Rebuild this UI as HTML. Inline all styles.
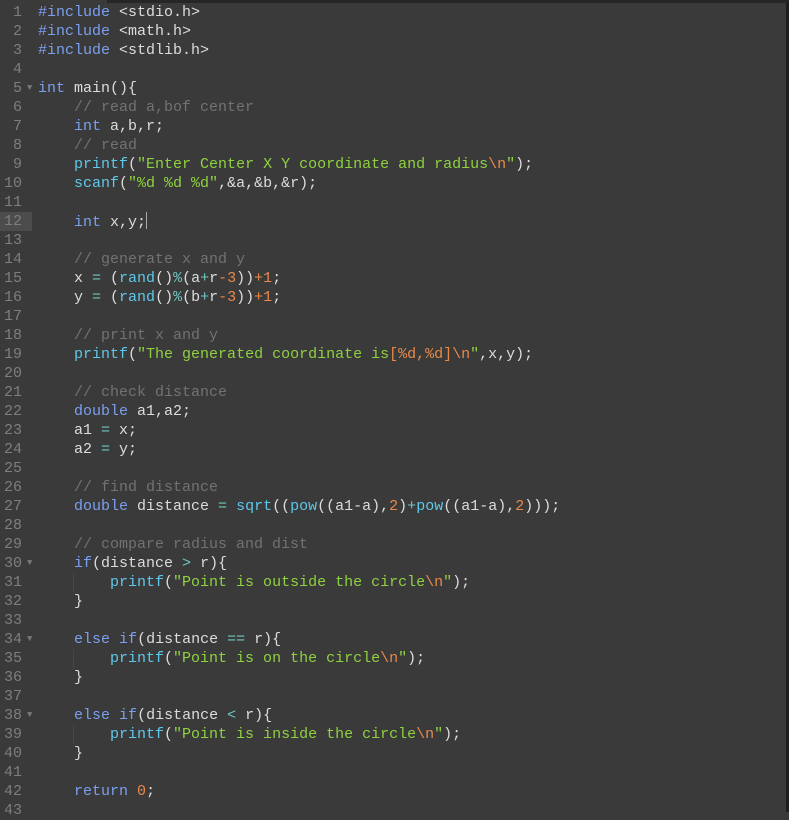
<!DOCTYPE html>
<html><head><meta charset="utf-8"><style>
html,body{margin:0;padding:0;width:789px;height:812px;overflow:hidden;background:#3a3a3a;}
#top{position:absolute;left:107px;top:0;width:682px;height:3px;background:#262626;}
#right{position:absolute;right:0;top:3px;width:3px;height:809px;background:#1e1e1e;}
.l{position:absolute;left:0;height:19px;width:789px;font-family:"Liberation Mono",monospace;font-size:15px;line-height:19px;white-space:pre;color:#dcdcdc;}
.n{position:absolute;left:0;width:22px;text-align:right;color:#7e7e7e;}
.f{position:absolute;left:27px;color:#777;font-size:9px;}
.c{position:absolute;left:38px;}
.k{color:#7b9ff0}.fn{color:#5ec8ea}.s{color:#8fd23f}.nm{color:#e8894a}.cm{color:#727272}.o{color:#6fc7c0}.e{color:#e8894a}
.hl{background:#4c4c4c;}
.g{position:absolute;width:1px;background:#474747;}
.cur{display:inline-block;width:1px;height:17px;background:#aaa;vertical-align:-3px;}
</style></head><body>
<div id="top"></div><div id="right"></div>
<div class="g" style="left:73px;top:573px;height:19px"></div>
<div class="g" style="left:73px;top:649px;height:19px"></div>
<div class="g" style="left:73px;top:725px;height:19px"></div>
<div class="l" style="top:3px"><span class="n">1</span><span class="c"><span class="k">#include</span> &lt;stdio.h&gt;</span></div>
<div class="l" style="top:22px"><span class="n">2</span><span class="c"><span class="k">#include</span> &lt;math.h&gt;</span></div>
<div class="l" style="top:41px"><span class="n">3</span><span class="c"><span class="k">#include</span> &lt;stdlib.h&gt;</span></div>
<div class="l" style="top:60px"><span class="n">4</span></div>
<div class="l" style="top:79px"><span class="n">5</span><span class="f">▼</span><span class="c"><span class="k">int</span> main(){</span></div>
<div class="l" style="top:98px"><span class="n">6</span><span class="c">    <span class="cm">// read a,bof center</span></span></div>
<div class="l" style="top:117px"><span class="n">7</span><span class="c">    <span class="k">int</span> a,b,r;</span></div>
<div class="l" style="top:136px"><span class="n">8</span><span class="c">    <span class="cm">// read</span></span></div>
<div class="l" style="top:155px"><span class="n">9</span><span class="c">    <span class="fn">printf</span>(<span class="s">"Enter Center X Y coordinate and radius</span><span class="e">\n</span><span class="s">"</span>);</span></div>
<div class="l" style="top:174px"><span class="n">10</span><span class="c">    <span class="fn">scanf</span>(<span class="s">"%d %d %d"</span>,&amp;a,&amp;b,&amp;r);</span></div>
<div class="l" style="top:193px"><span class="n">11</span></div>
<div class="l" style="top:212px"><span class="n hl" style="width:32px;padding-right:0;text-align:right"><span style="padding-right:10px">12</span></span><span class="c">    <span class="k">int</span> x,y;<span class="cur"></span></span></div>
<div class="l" style="top:231px"><span class="n">13</span></div>
<div class="l" style="top:250px"><span class="n">14</span><span class="c">    <span class="cm">// generate x and y</span></span></div>
<div class="l" style="top:269px"><span class="n">15</span><span class="c">    x <span class="o">=</span> (<span class="fn">rand</span>()<span class="o">%</span>(a<span class="o">+</span>r<span class="nm">-3</span>))<span class="nm">+1</span>;</span></div>
<div class="l" style="top:288px"><span class="n">16</span><span class="c">    y <span class="o">=</span> (<span class="fn">rand</span>()<span class="o">%</span>(b<span class="o">+</span>r<span class="nm">-3</span>))<span class="nm">+1</span>;</span></div>
<div class="l" style="top:307px"><span class="n">17</span></div>
<div class="l" style="top:326px"><span class="n">18</span><span class="c">    <span class="cm">// print x and y</span></span></div>
<div class="l" style="top:345px"><span class="n">19</span><span class="c">    <span class="fn">printf</span>(<span class="s">"The generated coordinate is</span><span class="e">[%d,%d]\n</span><span class="s">"</span>,x,y);</span></div>
<div class="l" style="top:364px"><span class="n">20</span></div>
<div class="l" style="top:383px"><span class="n">21</span><span class="c">    <span class="cm">// check distance</span></span></div>
<div class="l" style="top:402px"><span class="n">22</span><span class="c">    <span class="k">double</span> a1,a2;</span></div>
<div class="l" style="top:421px"><span class="n">23</span><span class="c">    a1 <span class="o">=</span> x;</span></div>
<div class="l" style="top:440px"><span class="n">24</span><span class="c">    a2 <span class="o">=</span> y;</span></div>
<div class="l" style="top:459px"><span class="n">25</span></div>
<div class="l" style="top:478px"><span class="n">26</span><span class="c">    <span class="cm">// find distance</span></span></div>
<div class="l" style="top:497px"><span class="n">27</span><span class="c">    <span class="k">double</span> distance <span class="o">=</span> <span class="fn">sqrt</span>((<span class="fn">pow</span>((a1-a),<span class="nm">2</span>)<span class="o">+</span><span class="fn">pow</span>((a1-a),<span class="nm">2</span>)));</span></div>
<div class="l" style="top:516px"><span class="n">28</span></div>
<div class="l" style="top:535px"><span class="n">29</span><span class="c">    <span class="cm">// compare radius and dist</span></span></div>
<div class="l" style="top:554px"><span class="n">30</span><span class="f">▼</span><span class="c">    <span class="k">if</span>(distance <span class="o">&gt;</span> r){</span></div>
<div class="l" style="top:573px"><span class="n">31</span><span class="c">        <span class="fn">printf</span>(<span class="s">"Point is outside the circle</span><span class="e">\n</span><span class="s">"</span>);</span></div>
<div class="l" style="top:592px"><span class="n">32</span><span class="c">    }</span></div>
<div class="l" style="top:611px"><span class="n">33</span></div>
<div class="l" style="top:630px"><span class="n">34</span><span class="f">▼</span><span class="c">    <span class="k">else</span> <span class="k">if</span>(distance <span class="o">==</span> r){</span></div>
<div class="l" style="top:649px"><span class="n">35</span><span class="c">        <span class="fn">printf</span>(<span class="s">"Point is on the circle</span><span class="e">\n</span><span class="s">"</span>);</span></div>
<div class="l" style="top:668px"><span class="n">36</span><span class="c">    }</span></div>
<div class="l" style="top:687px"><span class="n">37</span></div>
<div class="l" style="top:706px"><span class="n">38</span><span class="f">▼</span><span class="c">    <span class="k">else</span> <span class="k">if</span>(distance <span class="o">&lt;</span> r){</span></div>
<div class="l" style="top:725px"><span class="n">39</span><span class="c">        <span class="fn">printf</span>(<span class="s">"Point is inside the circle</span><span class="e">\n</span><span class="s">"</span>);</span></div>
<div class="l" style="top:744px"><span class="n">40</span><span class="c">    }</span></div>
<div class="l" style="top:763px"><span class="n">41</span></div>
<div class="l" style="top:782px"><span class="n">42</span><span class="c">    <span class="k">return</span> <span class="nm">0</span>;</span></div>
<div class="l" style="top:801px"><span class="n">43</span></div>
</body></html>
